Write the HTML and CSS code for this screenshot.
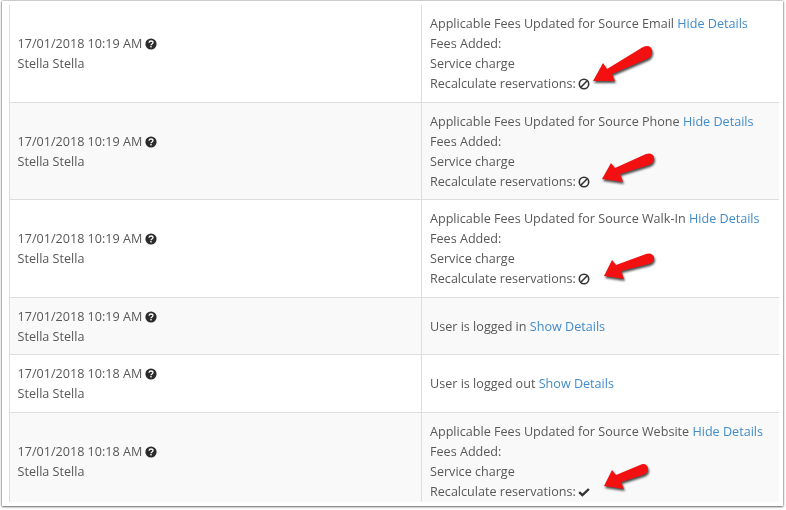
FILE: index.html
```html
<!DOCTYPE html>
<html lang="en">
<head>
<meta charset="utf-8">
<title>Activity log</title>
<link rel="stylesheet" href="styles.css">
</head>
<body>
<svg class="defs" width="0" height="0" aria-hidden="true">
  <symbol id="i-help" viewBox="0 0 12 12">
    <circle cx="6" cy="6" r="5.6" fill="#2b2b2b"/>
    <path d="M4 4.7C4.1 3.5 5 3 6 3c1.2 0 2 .7 2 1.6 0 1.5-2 1.3-2 2.7" fill="none" stroke="#fff" stroke-width="1.3"/>
    <rect x="5.3" y="8" width="1.4" height="1.4" fill="#fff"/>
  </symbol>
  <symbol id="i-ban" viewBox="0 0 12 12">
    <circle cx="6" cy="6" r="4.7" fill="none" stroke="#333" stroke-width="1.6"/>
    <path d="M2.8 9.2 9.2 2.8" stroke="#333" stroke-width="1.6"/>
  </symbol>
  <symbol id="i-check" viewBox="0 0 12 12">
    <path d="M1.2 6.2 4.4 9.2 10.9 3" fill="none" stroke="#333" stroke-width="2.4"/>
  </symbol>
</svg>
<main class="window">
  <div class="log">
    <div class="row">
      <div class="cell when"><div>17/01/2018 10:19 AM <svg class="icon"><use href="#i-help"/></svg></div><div>Stella Stella</div></div>
      <div class="cell what">
        <div>Applicable Fees Updated for Source Email <a href="#">Hide Details</a></div>
        <div>Fees Added:</div><div>Service charge</div>
        <div>Recalculate reservations: <svg class="icon"><use href="#i-ban"/></svg></div>
      </div>
    </div>
    <div class="row">
      <div class="cell when"><div>17/01/2018 10:19 AM <svg class="icon"><use href="#i-help"/></svg></div><div>Stella Stella</div></div>
      <div class="cell what">
        <div>Applicable Fees Updated for Source Phone <a href="#">Hide Details</a></div>
        <div>Fees Added:</div><div>Service charge</div>
        <div>Recalculate reservations: <svg class="icon"><use href="#i-ban"/></svg></div>
      </div>
    </div>
    <div class="row">
      <div class="cell when"><div>17/01/2018 10:19 AM <svg class="icon"><use href="#i-help"/></svg></div><div>Stella Stella</div></div>
      <div class="cell what">
        <div>Applicable Fees Updated for Source Walk-In <a href="#">Hide Details</a></div>
        <div>Fees Added:</div><div>Service charge</div>
        <div>Recalculate reservations: <svg class="icon"><use href="#i-ban"/></svg></div>
      </div>
    </div>
    <div class="row">
      <div class="cell when"><div>17/01/2018 10:19 AM <svg class="icon"><use href="#i-help"/></svg></div><div>Stella Stella</div></div>
      <div class="cell what"><div>User is logged in <a href="#">Show Details</a></div></div>
    </div>
    <div class="row">
      <div class="cell when"><div>17/01/2018 10:18 AM <svg class="icon"><use href="#i-help"/></svg></div><div>Stella Stella</div></div>
      <div class="cell what"><div>User is logged out <a href="#">Show Details</a></div></div>
    </div>
    <div class="row">
      <div class="cell when"><div>17/01/2018 10:18 AM <svg class="icon"><use href="#i-help"/></svg></div><div>Stella Stella</div></div>
      <div class="cell what">
        <div>Applicable Fees Updated for Source Website <a href="#">Hide Details</a></div>
        <div>Fees Added:</div><div>Service charge</div>
        <div>Recalculate reservations: <svg class="icon"><use href="#i-check"/></svg></div>
      </div>
    </div>
  </div>
  <svg class="arrows" viewBox="0 0 786 510" aria-hidden="true">
    <path d="M593 81 603 63 607 69 643 47Q650 44 652 50 653 56 647 59L612 74 615 81Z"/>
    <path d="M602 179 611 163 615 168 646 154Q652 152 654 157 655 162 649 165L620 174 623 182Z"/>
    <path d="M604 276 612 260 616 265 646 254Q652 252 654 257 655 262 649 264L621 271 624 279Z"/>
    <path d="M604 486 612 470 616 475 640 465Q646 462 648 468 649 473 643 475L621 482 624 489Z"/>
  </svg>
</main>
</body>
</html>
```
FILE: styles.css
```css
* { box-sizing: border-box; }
html, body { margin: 0; padding: 0; background: #fff; }
body { width: 786px; height: 510px; overflow: hidden; padding: 1px 3px 4px 2px; }
.defs { position: absolute; }
.window {
  position: relative;
  height: 505px;
  background: #fff;
  padding: 4px 4px 4px 7px;
  box-shadow: 0 0 2px rgba(0,0,0,.55), 0 1px 2px rgba(0,0,0,.45);
}
.log {
  height: 100%;
  overflow: hidden;
  border-left: 1px solid #ddd;
  font: 12.6px/20px "Open Sans", sans-serif;
  color: #585858;
  filter: blur(.35px);
}
.row {
  display: grid;
  grid-template-columns: 411px 1fr;
  border-bottom: 1px solid #ddd;
}
.row:nth-child(even) { background: #f9f9f9; }
.cell {
  display: flex;
  flex-direction: column;
  justify-content: center;
  padding: 9px 8px 7.5px;
}
.when { padding-left: 7.5px; }
.what { border-left: 1px solid #ddd; }
a { color: #428bca; text-decoration: none; }
.icon { width: 12px; height: 12px; vertical-align: -2px; margin-left: -1px; }
.arrows {
  position: absolute;
  left: -2px;
  top: -1px;
  width: 786px;
  height: 510px;
  fill: #f21010;
  filter: drop-shadow(1px 2px 1px rgba(0,0,0,.7));
  pointer-events: none;
}
```
